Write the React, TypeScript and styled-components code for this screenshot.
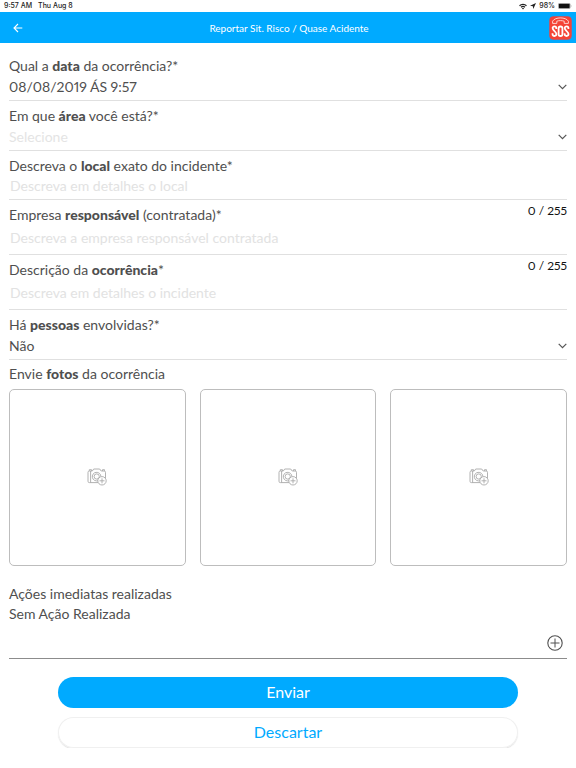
import React, { useState } from 'react';
import styled, { createGlobalStyle } from 'styled-components';

const BLUE = '#00aaff';
const INK = '#4f4f4f';

const GlobalStyle = createGlobalStyle`
  *, *::before, *::after { box-sizing: border-box; }
  body {
    margin: 0;
    background: #fff;
    color: ${INK};
    font: 14px/20px Lato, "Open Sans", sans-serif;
    font-variant-numeric: proportional-nums;
  }
  button, input, select {
    font: inherit;
    font-variant-numeric: inherit;
    color: inherit;
    margin: 0;
    padding: 0;
    border: 0;
    background: none;
  }
  button { cursor: pointer; }
  svg { display: block; }
`;

const StatusBar = styled.div`
  display: flex;
  justify-content: space-between;
  align-items: center;
  height: 12px;
  padding: 0 4px;
  color: #222;
  font: 500 7px/12px Inter, sans-serif;
`;

const StatusGroup = styled.div<{ $gap: number }>`
  display: flex;
  align-items: center;
  gap: ${(p) => p.$gap}px;
`;

const Header = styled.header`
  display: grid;
  grid-template-columns: 24px 1fr 24px;
  align-items: center;
  height: 31px;
  padding: 0 4px 0 6px;
  background: ${BLUE};
  color: #fff;
`;

const Title = styled.h1`
  margin: 0;
  text-align: center;
  font-size: 10px;
  line-height: 16px;
  font-weight: 400;
`;

const IconButton = styled.button`
  display: flex;
  align-items: center;
  justify-content: center;
  width: 24px;
  height: 24px;
`;

const Form = styled.form`
  padding: 8px 9px 0;
`;

const Field = styled.div<{ $height: number }>`
  display: flex;
  flex-direction: column;
  min-height: ${(p) => p.$height}px;
  padding-top: 5px;
  border-bottom: 1px solid #e0e0e0;
`;

const LabelRow = styled.div`
  display: flex;
  justify-content: space-between;
  line-height: 20px;
`;

const Label = styled.label`
  b { font-weight: 900; }
`;

const Counter = styled.output`
  color: #111;
  font-size: 12px;
  line-height: 12px;
`;

const SelectBox = styled.div`
  display: grid;
  grid-template-columns: 1fr 9px;
  align-items: center;
  height: 21px;
`;

const Select = styled.select<{ $empty?: boolean }>`
  grid-area: 1 / 1 / 2 / 3;
  width: 100%;
  height: 21px;
  appearance: none;
  color: ${(p) => (p.$empty ? '#e4e4e4' : INK)};
`;

const Chevron = styled.svg`
  grid-area: 1 / 2 / 2 / 3;
  pointer-events: none;
`;

const TextInput = styled.input`
  flex: 1;
  width: 100%;
  padding: 0 1px 3px;
  &::placeholder { color: #e2e2e2; opacity: 1; }
`;

const PhotoTitle = styled.h2`
  margin: 0;
  padding: 4px 0 5px;
  font-size: 14px;
  line-height: 20px;
  font-weight: 400;
  b { font-weight: 900; }
`;

const Photos = styled.div`
  display: grid;
  grid-template-columns: repeat(3, 1fr);
  gap: 14px;
`;

const Photo = styled.button`
  display: flex;
  align-items: center;
  justify-content: center;
  aspect-ratio: 1;
  border: 1px solid #bdbdbd;
  border-radius: 5px;
`;

const Actions = styled.section`
  margin-top: 18px;
  border-bottom: 1px solid #8c8c8c;
`;

const ActionText = styled.p`
  margin: 0;
  line-height: 20px;
`;

const AddRow = styled.div`
  display: flex;
  justify-content: flex-end;
  padding: 7px 0 3px;
`;

const Buttons = styled.div`
  display: flex;
  flex-direction: column;
  gap: 9px;
  padding: 18px 49px 0;
`;

const Pill = styled.button<{ $primary?: boolean }>`
  height: 31px;
  border-radius: 16px;
  font-size: 16px;
  line-height: 20px;
  color: ${(p) => (p.$primary ? '#fff' : BLUE)};
  background: ${(p) => (p.$primary ? BLUE : '#fff')};
  box-shadow: ${(p) => (p.$primary ? 'none' : 'inset 0 0 0 1px #f0f0f0, 0 1px 1px #e2e2e2')};
`;

function WifiIcon() {
  return (
    <svg width="8" height="7" viewBox="0 0 16 13" fill="none" stroke="#222" strokeWidth="2.4">
      <path d="M1 5a10 10 0 0 1 14 0M4 8a6 6 0 0 1 8 0" />
      <path d="M5.8 10.2a3.2 3.2 0 0 1 4.4 0L8 12.6z" fill="#222" stroke="none" />
    </svg>
  );
}

function LocationIcon() {
  return (
    <svg width="6" height="6" viewBox="0 0 12 12" fill="#222">
      <path d="M12 0 6.5 12 5.7 6.3 0 5.5z" />
    </svg>
  );
}

function BatteryIcon() {
  return (
    <svg width="14" height="6" viewBox="0 0 14 6">
      <rect x=".25" y=".25" width="12" height="5.5" rx="1.4" fill="none" stroke="#777" strokeWidth=".5" />
      <rect x=".8" y=".8" width="10.9" height="4.4" rx=".8" fill="#111" />
      <path d="M13 2v2q.8-1 0-2" fill="#777" />
    </svg>
  );
}

function BackIcon() {
  return (
    <svg width="10" height="10" viewBox="0 0 10 10" fill="none" stroke="#fff" strokeWidth="1.1">
      <path d="M9.3 5H1M5 1 1 5l4 4" />
    </svg>
  );
}

function SosIcon() {
  return (
    <svg width="23" height="24" viewBox="0 0 23 24">
      <rect x=".5" y=".5" width="22" height="23" rx="4" fill="#f44336" stroke="#d94e56" strokeWidth=".6" />
      <path
        d="M3.6 7.4V5.2C6 .8 17 .8 19.4 5.2v2.2h-4.2V5.2c-2.2-.8-5.2-.8-7.4 0v2.2z"
        fill="none"
        stroke="#ffe0dd"
        strokeWidth=".9"
        strokeLinejoin="round"
      />
      <g fill="none" stroke="#fff" strokeWidth="1.8">
        <path d="M7.3 13v-.9c0-2.2-3.700-2.2-3.700 0 0 2.7 3.8 3.3 3.8 6 0 2.5-3.9 2.5-3.9 0v-.8" />
        <rect x="9.6" y="10.5" width="3.8" height="9.5" rx="1.8" />
        <path d="M19.4 13v-.9c0-2.2-3.700-2.2-3.700 0 0 2.7 3.8 3.3 3.8 6 0 2.5-3.9 2.5-3.9 0v-.8" />
      </g>
    </svg>
  );
}

function ChevronIcon() {
  return (
    <Chevron width="9" height="6" viewBox="0 0 9 6" fill="none" stroke="#555" strokeWidth="1.2">
      <path d="M.7.8 4.5 4.6 8.3.8" />
    </Chevron>
  );
}

function CameraIcon() {
  return (
    <svg width="20" height="18" viewBox="0 0 20 18" fill="none" stroke="#a9a9a9" strokeWidth=".9">
      <path d="M11.5 14.6H2.3Q1 14.6 1 13.3V4.4Q1 3 2.3 3h3L6.7 1h6L14.2 3h3q1.3 0 1.3 1.4V10" />
      <path d="M2.3 2.9V1.7h2.2v1.2M15.5 2.9V1.7h2v1.2M3.6 3v11.6" />
      <path d="M11.2 12.6a4.3 4.3 0 1 1 2.7-4" />
      <circle cx="9.7" cy="8.5" r="2.6" />
      <circle cx="15" cy="12.8" r="4.2" fill="#fff" />
      <path d="M15 10.3v5M12.5 12.8h5" />
    </svg>
  );
}

function PlusIcon() {
  return (
    <svg width="16" height="16" viewBox="0 0 16 16" fill="none" stroke="#505050">
      <circle cx="8" cy="8" r="7.2" strokeWidth="1.1" />
      <path d="M8 3.5v9M3.5 8h9" strokeWidth="1" />
    </svg>
  );
}

type SelectFieldProps = {
  id: string;
  label: React.ReactNode;
  options: string[];
  empty?: boolean;
};

function SelectField({ id, label, options, empty }: SelectFieldProps) {
  const [value, setValue] = useState(options[0]);
  return (
    <Field $height={50}>
      <LabelRow><Label htmlFor={id}>{label}</Label></LabelRow>
      <SelectBox>
        <Select id={id} value={value} onChange={(e) => setValue(e.target.value)} $empty={empty}>
          {options.map((o) => <option key={o}>{o}</option>)}
        </Select>
        <ChevronIcon />
      </SelectBox>
    </Field>
  );
}

type TextFieldProps = {
  id: string;
  label: React.ReactNode;
  placeholder: string;
  limit?: number;
};

function TextField({ id, label, placeholder, limit }: TextFieldProps) {
  const [value, setValue] = useState('');
  return (
    <Field $height={limit ? 55 : 49}>
      <LabelRow>
        <Label htmlFor={id}>{label}</Label>
        {limit && <Counter htmlFor={id}>{value.length} / {limit}</Counter>}
      </LabelRow>
      <TextInput
        id={id}
        placeholder={placeholder}
        maxLength={limit}
        value={value}
        onChange={(e) => setValue(e.target.value)}
      />
    </Field>
  );
}

export default function App() {
  return (
    <>
      <GlobalStyle />
      <StatusBar>
        <StatusGroup $gap={6}><span>9:57 AM</span><span>Thu Aug 8</span></StatusGroup>
        <StatusGroup $gap={3}>
          <WifiIcon />
          <LocationIcon />
          <span>98%</span>
          <BatteryIcon />
        </StatusGroup>
      </StatusBar>
      <Header>
        <IconButton type="button" aria-label="Voltar"><BackIcon /></IconButton>
        <Title>Reportar Sit. Risco / Quase Acidente</Title>
        <IconButton type="button" aria-label="SOS"><SosIcon /></IconButton>
      </Header>
      <Form onSubmit={(e) => e.preventDefault()}>
        <SelectField id="data" label={<>Qual a <b>data</b> da ocorrência?*</>} options={['08/08/2019 ÁS 9:57']} />
        <SelectField id="area" label={<>Em que <b>área</b> você está?*</>} options={['Selecione']} empty />
        <TextField
          id="local"
          label={<>Descreva o <b>local</b> exato do incidente*</>}
          placeholder="Descreva em detalhes o local"
        />
        <TextField
          id="empresa"
          label={<>Empresa <b>responsável</b> (contratada)*</>}
          placeholder="Descreva a empresa responsável contratada"
          limit={255}
        />
        <TextField
          id="descricao"
          label={<>Descrição da <b>ocorrência</b>*</>}
          placeholder="Descreva em detalhes o incidente"
          limit={255}
        />
        <SelectField id="pessoas" label={<>Há <b>pessoas</b> envolvidas?*</>} options={['Não', 'Sim']} />
        <PhotoTitle>Envie <b>fotos</b> da ocorrência</PhotoTitle>
        <Photos>
          {[1, 2, 3].map((n) => (
            <Photo key={n} type="button" aria-label={`Adicionar foto ${n}`}><CameraIcon /></Photo>
          ))}
        </Photos>
        <Actions>
          <ActionText>Ações imediatas realizadas</ActionText>
          <ActionText>Sem Ação Realizada</ActionText>
          <AddRow>
            <IconButton type="button" aria-label="Adicionar ação"><PlusIcon /></IconButton>
          </AddRow>
        </Actions>
        <Buttons>
          <Pill type="submit" $primary>Enviar</Pill>
          <Pill type="button">Descartar</Pill>
        </Buttons>
      </Form>
    </>
  );
}
